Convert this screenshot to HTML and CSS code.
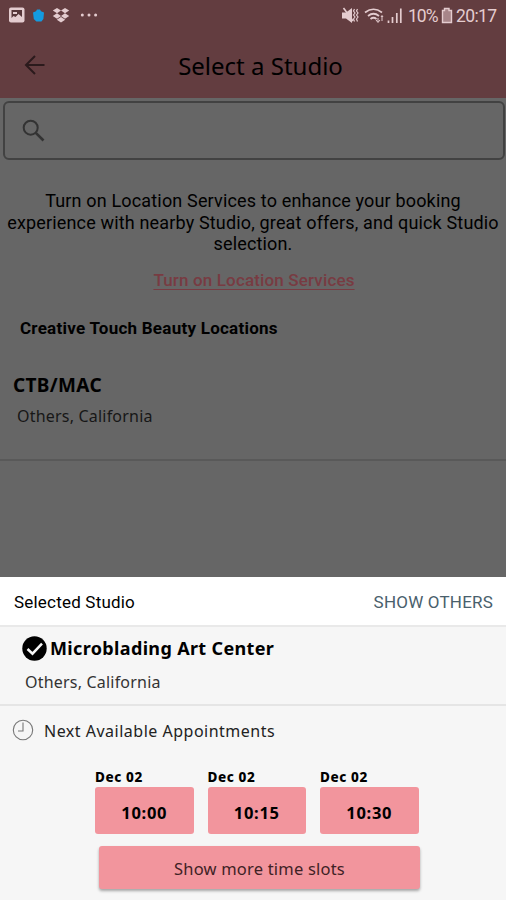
FILE: index.html
```html
<!DOCTYPE html>
<html lang="en">
<head>
<meta charset="utf-8">
<title>Select a Studio</title>
<link rel="stylesheet" href="styles.css">
</head>
<body>
<div class="screen">
  <header class="header">
    <div class="status">
      <svg class="status-left" width="100" height="30" viewBox="0 0 100 30">
        <rect x="9" y="7.5" width="15.5" height="15" rx="2" fill="#e4cccf"/>
        <path d="M11.5 10h10.5v7l-3.5-3-3 3-2-1-2 2z" fill="#573639"/>
        <path d="M13 12h4v2h-4z" fill="#e4cccf"/>
        <path d="M37 9.5h3l1 1.8 3 1.2-.6 6.5-2 2.5h-5l-2.6-2.5-.8-6.5 3-1.2z" fill="#149be0"/>
        <path d="M57 8l4 2.6-4 2.7-4.2-2.7zM65 8l4.2 2.6-4.2 2.7-4-2.7zM57 13.3l4 2.7-4 2.7-4.2-2.7zM65 13.3l4.2 2.7-4.2 2.7-4-2.7zM61 17l4.2 2.7-4.2 2.9-4.2-2.9z" fill="#e4cccf"/>
        <g fill="#e4cccf"><circle cx="82.3" cy="15" r="1.5"/><circle cx="89" cy="15" r="1.5"/><circle cx="95.6" cy="15" r="1.5"/></g>
      </svg>
      <div class="status-right">
        <svg width="64" height="30" viewBox="340 0 64 30">
          <path d="M342 12.500h4l6-4.500v15l-6-4.500h-4z" fill="#e4cccf"/>
          <path d="M343.500 8l9.500 13" fill="none" stroke="#e4cccf" stroke-width="1.600"/>
          <path d="M354.500 9l-1 2 1.500 2-1.500 2 1.500 2-1.500 2 1 2.500M357.500 9l-1 2 1.500 2-1.500 2 1.500 2-1.500 2 1 2.500" fill="none" stroke="#e4cccf" stroke-width="1.200"/>
          <path d="M365 12.500q8.500-6.500 17 0M368 16q5.500-4.500 11 0M370.500 19q3-2.500 6 0" fill="none" stroke="#e4cccf" stroke-width="1.700"/>
          <path d="M378 18v4m-2-2l2 2.500 2-2.500M382 21v-5m-1 1l1-1.500 1 1.500" fill="none" stroke="#e4cccf" stroke-width="1"/>
          <path d="M388.500 23v-2.500M392.500 23v-6M396.800 23v-10M400.800 23v-14.500" stroke="#e4cccf" stroke-width="1.700"/>
        </svg>
        <span class="percent">10%</span>
        <svg class="battery" width="12" height="30" viewBox="0 0 12 30"><path d="M3.500 8.500h4.500v2h2.500v12h-9V10.500h2z" fill="#a78589" stroke="#e4cccf" stroke-width="1.400"/></svg>
        <span class="clock">20:17</span>
      </div>
    </div>
    <div class="titlebar">
      <svg class="back" width="22" height="22" viewBox="0 0 22 22"><path d="M20.500 11H3M11 2L2 11l9 9" fill="none" stroke="#2b1a1c" stroke-width="2"/></svg>
      <h1 class="title">Select a Studio</h1>
    </div>
  </header>
  <main class="content">
    <div class="search">
      <svg width="24" height="24" viewBox="0 0 24 24"><circle cx="8.700" cy="8.700" r="7" fill="none" stroke="#333" stroke-width="2"/><path d="M13.800 13.800l7.700 7.700" stroke="#333" stroke-width="2.600"/></svg>
    </div>
    <p class="notice"><span>Turn on Location Services to enhance your booking</span><br><span>experience with nearby Studio, great offers, and quick Studio</span><br><span>selection.</span></p>
    <div class="link-row"><a class="link">Turn on Location Services</a></div>
    <h2 class="section">Creative Touch Beauty Locations</h2>
    <div class="studio">
      <h3 class="studio-name">CTB/MAC</h3>
      <div class="place">Others, California</div>
    </div>
  </main>
  <section class="sheet">
    <div class="sheet-head"><span class="selected">Selected Studio</span><span class="others">SHOW OTHERS</span></div>
    <div class="chosen">
      <div class="chosen-row">
        <svg width="25" height="25" viewBox="0 0 25 25"><circle cx="12.500" cy="12.500" r="12.200" fill="#000"/><path d="M5.500 13l5 4.700 9.500-10" fill="none" stroke="#f6f6f6" stroke-width="2.500"/></svg>
        <h3 class="chosen-name">Microblading Art Center</h3>
      </div>
      <div class="place">Others, California</div>
    </div>
    <div class="next">
      <svg width="22" height="22" viewBox="0 0 22 22"><circle cx="11" cy="11" r="9.700" fill="none" stroke="#777" stroke-width="1.100"/><path d="M11 3.500V12H6" fill="none" stroke="#777" stroke-width="1.100"/></svg>
      <span class="next-text">Next Available Appointments</span>
    </div>
    <div class="slots">
      <div class="slot"><span class="date">Dec 02</span><div class="time"><span>10:00</span></div></div>
      <div class="slot"><span class="date">Dec 02</span><div class="time"><span>10:15</span></div></div>
      <div class="slot"><span class="date">Dec 02</span><div class="time"><span>10:30</span></div></div>
    </div>
    <div class="more"><span>Show more time slots</span></div>
  </section>
</div>
</body>
</html>
```
FILE: styles.css
```css
* { box-sizing: border-box; }
body { margin: 0; font-family: "Noto Sans", sans-serif; color: #000; }
h1, h2, h3, p { margin: 0; }
svg { display: block; flex: none; }
span, a, h1, h2, h3 { white-space: nowrap; }
.screen { width: 506px; height: 900px; display: flex; flex-direction: column; overflow: hidden; background: #666; }
.header { height: 98px; background: #633d40; flex: none; }
.status { height: 30px; display: flex; justify-content: space-between; padding-right: 9px; }
.status-right { display: flex; line-height: 33px; font-family: Roboto, sans-serif; font-size: 17.5px; color: #e4cccf; }
.percent { width: 30px; margin-left: 4px; letter-spacing: -1px; }
.battery { margin-left: 3px; }
.clock { margin-left: 3px; width: 41px; letter-spacing: -0.6px; }
.titlebar { height: 68px; position: relative; display: flex; justify-content: center; align-items: center; padding-left: 15px; }
.back { position: absolute; left: 24px; top: 24px; }
.title { font-size: 24px; font-weight: 400; line-height: 32px; margin-top: 3px; }
.content { height: 479px; padding-top: 3px; flex: none; }
.search { margin: 0 1px 0 3px; height: 59px; border: 2px solid #424242; border-radius: 6px; display: flex; align-items: center; padding-left: 17px; }
.notice { margin-top: 30px; text-align: center; font-family: Roboto, sans-serif; font-size: 18px; line-height: 21.5px; height: 65px; letter-spacing: 0.16px; }
.link-row { margin-top: 14px; line-height: 22px; text-align: center; padding-left: 2px; }
.link { font-family: Roboto, sans-serif; font-size: 17px; font-weight: 500; letter-spacing: 0.15px; color: #783b42; text-decoration: underline; text-decoration-thickness: 1px; text-underline-offset: 3px; }
.section { margin: 26px 0 0 20px; font: 700 17px/22px Roboto, sans-serif; letter-spacing: 0.25px; }
.studio { margin-top: 33px; height: 89px; padding-left: 13px; border-bottom: 2px solid #595959; }
.studio-name { font-size: 19px; line-height: 26px; font-weight: 700; letter-spacing: 0.35px; }
.place { font-size: 16px; line-height: 24px; margin: 6px 0 0 4px; color: #171717; letter-spacing: 0.2px; }
.sheet { flex: 1; background: #f6f6f6; }
.sheet-head { height: 50px; background: #fff; border-bottom: 2px solid #e9e9e9; display: flex; align-items: center; justify-content: space-between; padding: 2px 13px 0 14px; font: 17px Roboto, sans-serif; letter-spacing: 0.2px; }
.others { color: #49606c; }
.chosen { height: 79px; border-bottom: 2px solid #e5e5e5; padding: 8px 0 0 22px; }
.chosen-row { display: flex; align-items: center; gap: 3px; height: 26px; }
.chosen-name { font-size: 18px; line-height: 26px; letter-spacing: 0.35px; }
.chosen .place { margin: 9px 0 0 3px; color: #333; }
.next { height: 50px; display: flex; align-items: center; padding: 0 0 2px 12px; gap: 10px; font-size: 16px; color: #222; letter-spacing: 0.5px; }
.next-text { padding-top: 2px; }
.slots { display: flex; gap: 14px; margin: 11px 0 0 95px; }
.slot { width: 98.500px; }
.date { display: block; font-size: 13.500px; font-weight: 800; line-height: 20px; letter-spacing: 0.6px; }
.time { height: 47px; background: #f2959d; border-radius: 3px; display: flex; justify-content: center; align-items: center; font-size: 16.500px; font-weight: 700; letter-spacing: 0.7px; padding-top: 3px; }
.more { width: 321px; height: 43px; margin: 12px 0 0 99px; background: #f2959d; border-radius: 3px; box-shadow: 0 2px 3px #0005; display: flex; justify-content: center; align-items: center; font-size: 16.500px; letter-spacing: 0.2px; color: #3f2225; padding-top: 1px; }
```
